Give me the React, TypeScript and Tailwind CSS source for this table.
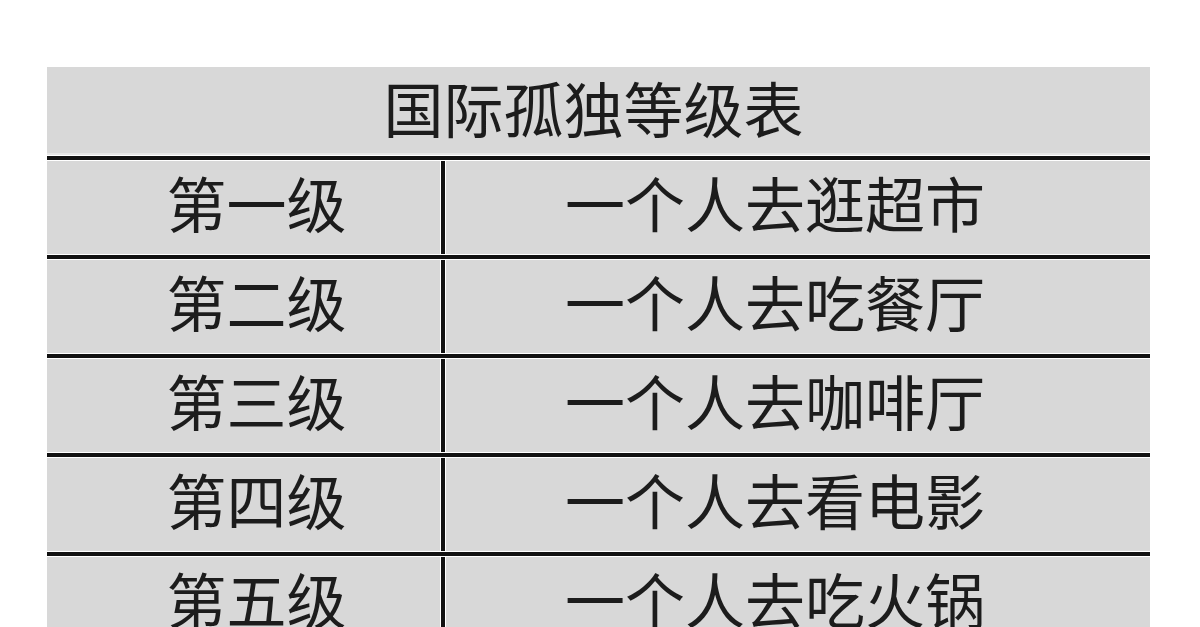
const rows = [
  ['第一级', '一个人去逛超市'],
  ['第二级', '一个人去吃餐厅'],
  ['第三级', '一个人去咖啡厅'],
  ['第四级', '一个人去看电影'],
  ['第五级', '一个人去吃火锅'],
];

const font = { fontFamily: '"Noto Sans CJK SC", "Noto Sans", sans-serif' };

export default function App() {
  return (
    <div className="h-[627px] overflow-hidden bg-white pt-[67px]" style={font}>
      <div className="ml-[47px] w-[1103px] bg-[#d8d8d8] text-[#1c1c1c] text-[60px] leading-none">
        {/* title row */}
        <div className="h-[88px] flex items-center justify-center pr-[10px] pb-[6px] border-b-[2px] border-[#e6e6e6]">
          国际孤独等级表
        </div>
        {rows.map(([level, desc]) => (
          <div key={level}>
            <div className="h-[6px] bg-[#111] border-y border-white" />
            <div className="h-[93px] flex">
              <div className="w-[393px] flex items-center justify-center pl-[26px] pb-[12px]">{level}</div>
              <div className="w-[6px] bg-[#111] border-x border-white" />
              <div className="flex-1 flex items-center justify-center pr-[46px] pb-[12px]">{desc}</div>
            </div>
          </div>
        ))}
      </div>
    </div>
  );
}
